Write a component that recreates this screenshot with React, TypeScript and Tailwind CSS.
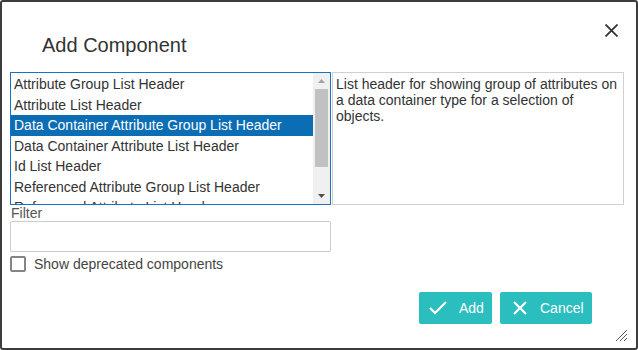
import React from "react";

const items = [
  "Attribute Group List Header",
  "Attribute List Header",
  "Data Container Attribute Group List Header",
  "Data Container Attribute List Header",
  "Id List Header",
  "Referenced Attribute Group List Header",
  "Referenced Attribute List Header",
  "Simple List Header",
];

export default function App() {
  return (
    <div
      className="relative w-[638px] h-[350px] bg-white border-2 border-[#3d3d3d] rounded-[3px] text-[#333]"
      style={{ fontFamily: '"Liberation Sans", Arial, sans-serif' }}
    >
      {/* Header */}
      <div className="h-[70px] pl-[40px] pt-[32px]">
        <div className="text-[20px] leading-[23px] text-[#333]">Add Component</div>
      </div>
      <button className="absolute left-[599px] top-[18px] w-[21px] h-[21px] flex items-center justify-center">
        <svg width="13" height="13" viewBox="0 0 13 13">
          <path d="M0.5 0.5 L12.5 12.5 M12.5 0.5 L0.5 12.5" stroke="#333" strokeWidth="1.8" />
        </svg>
      </button>

      <div className="pl-[8px]">
        {/* list + description */}
        <div className="flex">
          <div className="w-[321px] h-[133px] border border-[#1a72c4] flex overflow-hidden">
            <div className="flex-1 pt-[1px] overflow-hidden">
              {items.map((it, i) => (
                <div
                  key={it}
                  className={
                    "h-[20.5px] leading-[20.5px] pl-[3px] text-[14px] whitespace-nowrap " +
                    (i === 2 ? "bg-[#0b6db4] text-white" : "text-[#333]")
                  }
                >
                  {it}
                </div>
              ))}
            </div>
            <div className="w-[17px] h-full bg-[#f0f0f0] flex flex-col">
              <div className="h-[16px] flex items-center justify-center">
                <svg width="7" height="4" viewBox="0 0 7 4">
                  <path d="M3.5 0 L7 4 L0 4 Z" fill="#a3a3a3" />
                </svg>
              </div>
              <div className="mx-[2px] h-[78px] bg-[#c1c1c1]" />
              <div className="flex-1" />
              <div className="h-[16px] flex items-center justify-center">
                <svg width="7" height="4" viewBox="0 0 7 4">
                  <path d="M0 0 L7 0 L3.5 4 Z" fill="#505050" />
                </svg>
              </div>
            </div>
          </div>
          <div className="ml-[1px] w-[292px] h-[133px] border border-[#d0d0d0] px-[3px] pt-[3px] text-[14px] leading-[16px] text-[#333]">
            List header for showing group of attributes on a data container type for a selection of objects.
          </div>
        </div>

        {/* filter */}
        <div className="text-[14px] leading-[16px] text-[#555] pl-[1px]">Filter</div>
        <div className="w-[321px] h-[31px] border border-[#cccccc] rounded-[2px]" />

        <div className="mt-[4px] flex items-center h-[16px]">
          <div className="w-[16px] h-[16px] border-2 border-[#858585] rounded-[2px]" />
          <span className="ml-[8px] text-[14px] leading-[16px] text-[#444]">Show deprecated components</span>
        </div>

        {/* buttons */}
        <div className="mt-[20px] flex justify-end pr-[44px] gap-[8px]">
          <button className="h-[32px] w-[73px] bg-[#2bbebe] rounded-[2px] flex items-center text-white text-[14px] pl-[7px]">
            <svg width="24" height="24" viewBox="0 0 24 24" fill="none">
              <polyline points="20 6 9 17 4 12" stroke="white" strokeWidth="2.2" strokeLinecap="butt" strokeLinejoin="miter" />
            </svg>
            <span className="ml-[9px]">Add</span>
          </button>
          <button className="h-[32px] w-[92px] bg-[#2bbebe] rounded-[2px] flex items-center text-white text-[14px] pl-[13px]">
            <svg width="14" height="14" viewBox="0 0 14 14">
              <path d="M1 1 L13 13 M13 1 L1 13" stroke="white" strokeWidth="2.2" />
            </svg>
            <span className="ml-[13px]">Cancel</span>
          </button>
        </div>
      </div>

      {/* resize grip */}
      <svg className="absolute right-[9px] bottom-[7px]" width="11" height="11" viewBox="0 0 11 11">
        <path d="M0 11 L11 0 M4 11 L11 4 M8 11 L11 8" stroke="#555" strokeWidth="1" />
      </svg>
    </div>
  );
}
